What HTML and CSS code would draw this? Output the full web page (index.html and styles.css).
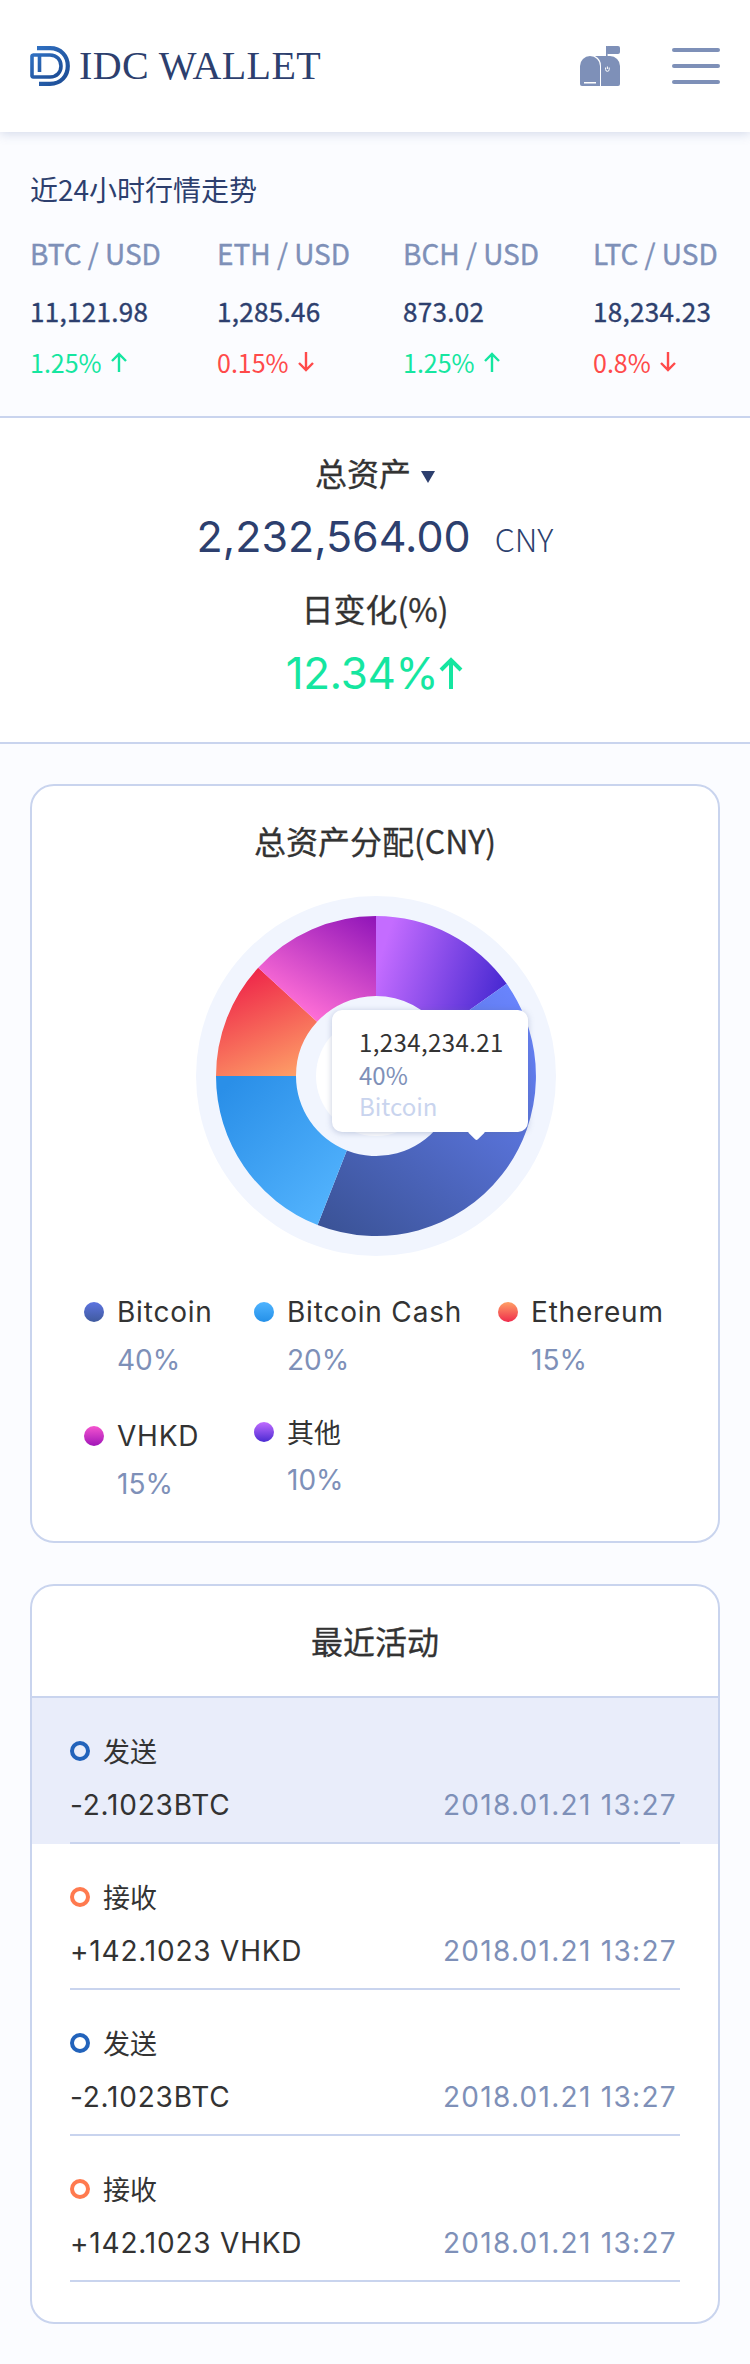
FILE: index.html
```html
<!DOCTYPE html>
<html lang="zh-CN">

<head>
  <meta charset="UTF-8">
  <meta name="viewport" content="width=device-width, initial-scale=1.0">
  <title>IDC Wallet</title>
  <link rel="stylesheet" href="styles.css">
</head>

<body>
  <header class="topbar">
    <div class="brand">
      <svg class="brand-mark" viewBox="0 0 40 40" width="40" height="40">
        <defs>
          <linearGradient id="logoBlue" x1="0" y1="0" x2="1" y2="1">
            <stop offset="0" stop-color="#2f6fc0" />
            <stop offset="1" stop-color="#1d4c94" />
          </linearGradient>
        </defs>
        <path d="M7 2.2H20C31 2.2 37.8 10 37.8 20S31 37.8 20 37.8H9" fill="none" stroke="url(#logoBlue)" stroke-width="4.2" />
        <path d="M10 9H3.5A1.8 1.8 0 0 0 2 11V29A1.8 1.8 0 0 0 3.5 31H20C27 31 31 26 31 20S27 9 20 9H9.5V26" fill="none" stroke="url(#logoBlue)" stroke-width="3.6" />
      </svg>
      <span class="brand-name">IDC WALLET</span>
    </div>
    <div class="topbar-actions">
      <svg class="mailbox" viewBox="0 0 40 40" width="40" height="40">
        <path d="M0 38V20a10 10 0 0 1 20 0V40H2a2 2 0 0 1-2-2Z" fill="#7e90b8" />
        <path d="M15 10H30a10 10 0 0 1 10 10V38a2 2 0 0 1-2 2H21V20a11 11 0 0 0-6-10Z" fill="#7e90b8" />
        <rect x="26" y="0" width="14" height="8" rx="2" fill="#7e90b8" />
        <rect x="26" y="0" width="1.6" height="11" fill="#7e90b8" />
        <rect x="4" y="36" width="12" height="1.5" fill="#fff" />
        <path d="M25.6 21.5v2a1.8 1.8 0 0 0 3.6 0v-2M27.4 20.5v2.5" fill="none" stroke="#fff" stroke-width="1" />
      </svg>
      <div class="burger">
        <span></span>
        <span></span>
        <span></span>
      </div>
    </div>
  </header>

  <section class="market">
    <h2 class="market-title">近24小时行情走势</h2>
    <div class="ticker">
      <div class="ticker-col">
        <div class="pair">BTC / USD</div>
        <div class="price">11,121.98</div>
        <div class="change up">1.25%
          <svg class="arrow" viewBox="0 0 18 20" width="18" height="20"><path d="M9 20V2M2 9L9 2L16 9" /></svg>
        </div>
      </div>
      <div class="ticker-col">
        <div class="pair">ETH / USD</div>
        <div class="price">1,285.46</div>
        <div class="change down">0.15%
          <svg class="arrow" viewBox="0 0 18 20" width="18" height="20"><path d="M9 0V18M2 11L9 18L16 11" /></svg>
        </div>
      </div>
      <div class="ticker-col">
        <div class="pair">BCH / USD</div>
        <div class="price">873.02</div>
        <div class="change up">1.25%
          <svg class="arrow" viewBox="0 0 18 20" width="18" height="20"><path d="M9 20V2M2 9L9 2L16 9" /></svg>
        </div>
      </div>
      <div class="ticker-col">
        <div class="pair">LTC / USD</div>
        <div class="price">18,234.23</div>
        <div class="change down">0.8%
          <svg class="arrow" viewBox="0 0 18 20" width="18" height="20"><path d="M9 0V18M2 11L9 18L16 11" /></svg>
        </div>
      </div>
    </div>
  </section>

  <section class="total">
    <div class="total-label">总资产<span class="caret"></span></div>
    <div class="total-amount">2,232,564.00<span class="total-unit">CNY</span></div>
    <div class="total-label daily">日变化(%)</div>
    <div class="total-change">12.34%<svg class="arrow-big" viewBox="0 0 26 32" width="26" height="32"><path d="M13 32V3M3 13L13 3L23 13" /></svg></div>
  </section>

  <main class="content">
    <section class="card alloc">
      <h3 class="card-title">总资产分配(CNY)</h3>
      <div class="donut">
        <svg viewBox="0 0 360 360" width="360" height="360">
          <defs>
            <linearGradient id="gPurple" gradientUnits="userSpaceOnUse" x1="185" y1="60" x2="310" y2="100">
              <stop offset="0" stop-color="#c46cff" />
              <stop offset="1" stop-color="#4427d0" />
            </linearGradient>
            <linearGradient id="gBlue" gradientUnits="userSpaceOnUse" x1="130" y1="340" x2="320" y2="90">
              <stop offset="0" stop-color="#3a5295" />
              <stop offset="1" stop-color="#6a85ff" />
            </linearGradient>
            <linearGradient id="gSky" gradientUnits="userSpaceOnUse" x1="30" y1="190" x2="150" y2="320">
              <stop offset="0" stop-color="#2a8fe8" />
              <stop offset="1" stop-color="#56b6ff" />
            </linearGradient>
            <linearGradient id="gOrange" gradientUnits="userSpaceOnUse" x1="60" y1="70" x2="110" y2="185">
              <stop offset="0" stop-color="#ee2449" />
              <stop offset="1" stop-color="#ffa869" />
            </linearGradient>
            <linearGradient id="gPink" gradientUnits="userSpaceOnUse" x1="120" y1="125" x2="180" y2="20">
              <stop offset="0" stop-color="#ff6fd6" />
              <stop offset="1" stop-color="#8f14b8" />
            </linearGradient>
          </defs>
          <circle cx="180" cy="180" r="180" fill="#f1f5fe" />
          <path d="M180 20A160 160 0 0 1 310.7 87.8L245.4 133.9A80 80 0 0 0 180 100Z" fill="url(#gPurple)" />
          <path d="M310.7 87.8A160 160 0 0 1 121.6 329L150.8 254.5A80 80 0 0 0 245.4 133.9Z" fill="url(#gBlue)" />
          <path d="M121.6 329A160 160 0 0 1 20 180L100 180A80 80 0 0 0 150.8 254.5Z" fill="url(#gSky)" />
          <path d="M20 180A160 160 0 0 1 62.2 71.7L121.1 125.8A80 80 0 0 0 100 180Z" fill="url(#gOrange)" />
          <path d="M62.2 71.7A160 160 0 0 1 180 20L180 100A80 80 0 0 0 121.1 125.8Z" fill="url(#gPink)" />
          <circle cx="180" cy="180" r="60" fill="#fff" />
        </svg>
        <div class="tooltip">
          <div class="tip-value">1,234,234.21</div>
          <div class="tip-pct">40%</div>
          <div class="tip-name">Bitcoin</div>
        </div>
      </div>
      <div class="legend">
        <div class="legend-item">
          <div class="legend-name"><i class="dot dot-btc"></i>Bitcoin</div>
          <div class="legend-pct">40%</div>
        </div>
        <div class="legend-item">
          <div class="legend-name"><i class="dot dot-bch"></i>Bitcoin Cash</div>
          <div class="legend-pct">20%</div>
        </div>
        <div class="legend-item">
          <div class="legend-name"><i class="dot dot-eth"></i>Ethereum</div>
          <div class="legend-pct">15%</div>
        </div>
        <div class="legend-item">
          <div class="legend-name"><i class="dot dot-vhkd"></i>VHKD</div>
          <div class="legend-pct">15%</div>
        </div>
        <div class="legend-item raised">
          <div class="legend-name cjk"><i class="dot dot-other"></i>其他</div>
          <div class="legend-pct">10%</div>
        </div>
      </div>
    </section>

    <section class="card activity">
      <h3 class="card-title activity-title">最近活动</h3>
      <div class="row active">
        <div class="row-inner">
          <div class="row-type"><i class="ring ring-send"></i>发送</div>
          <div class="row-line"><span class="row-amount">-2.1023BTC</span><span class="row-date">2018.01.21 13:27</span></div>
        </div>
      </div>
      <div class="row">
        <div class="row-inner">
          <div class="row-type"><i class="ring ring-recv"></i>接收</div>
          <div class="row-line"><span class="row-amount">+142.1023 VHKD</span><span class="row-date">2018.01.21 13:27</span></div>
        </div>
      </div>
      <div class="row">
        <div class="row-inner">
          <div class="row-type"><i class="ring ring-send"></i>发送</div>
          <div class="row-line"><span class="row-amount">-2.1023BTC</span><span class="row-date">2018.01.21 13:27</span></div>
        </div>
      </div>
      <div class="row">
        <div class="row-inner">
          <div class="row-type"><i class="ring ring-recv"></i>接收</div>
          <div class="row-line"><span class="row-amount">+142.1023 VHKD</span><span class="row-date">2018.01.21 13:27</span></div>
        </div>
      </div>
    </section>
  </main>
</body>

</html>
```

FILE: styles.css
```css
* {
  box-sizing: border-box;
}

body {
  margin: 0;
  font-family: "Noto Sans CJK SC", "Noto Sans", sans-serif;
  background-color: #fbfcff;
  color: #333;
}

h2,
h3 {
  margin: 0;
  font-weight: 400;
}

.topbar {
  height: 132px;
  padding: 0 30px;
  display: flex;
  align-items: center;
  justify-content: space-between;
  background-color: #fff;
  box-shadow: 0 2px 10px rgba(100, 120, 170, 0.25);
  position: relative;
}

.brand {
  display: flex;
  align-items: center;
  gap: 9px;
}

.brand-name {
  font-family: "Liberation Serif", serif;
  font-size: 40px;
  line-height: 38px;
  letter-spacing: 0.4px;
  color: #2d3f6e;
}

.topbar-actions {
  display: flex;
  align-items: center;
  gap: 52px;
}

.burger {
  width: 48px;
  display: flex;
  flex-direction: column;
  gap: 12px;
}

.burger span {
  height: 4px;
  border-radius: 2px;
  background-color: #7e90b8;
}

.market {
  height: 286px;
  padding: 36px 30px 0;
  border-bottom: 2px solid #c9d4ee;
}

.market-title {
  font-size: 28px;
  line-height: 42px;
  color: #2d3f6e;
}

.ticker {
  margin-top: 22px;
  display: grid;
  grid-template-columns: 187px 186px 190px 1fr;
}

.pair {
  font-size: 28px;
  line-height: 42px;
  white-space: nowrap;
  color: #7e90b8;
  -webkit-text-stroke: 0.4px #7e90b8;
}

.price {
  margin-top: 16px;
  font-size: 26px;
  line-height: 42px;
  letter-spacing: 0.3px;
  color: #2d3f6e;
  -webkit-text-stroke: 0.4px #2d3f6e;
}

.change {
  margin-top: 10px;
  font-size: 25px;
  line-height: 40px;
  display: flex;
  align-items: center;
  gap: 8px;
}

.change.up {
  color: #15e6a0;
}

.change.down {
  color: #ff4a4a;
}

.arrow,
.arrow-big {
  fill: none;
  stroke: currentColor;
  stroke-width: 2.4;
}

.total {
  height: 326px;
  padding-top: 31px;
  background-color: #fff;
  border-bottom: 2px solid #c9d4ee;
  text-align: center;
}

.total-label {
  font-size: 32px;
  line-height: 46px;
  -webkit-text-stroke: 0.3px #333;
}

.total-label.daily {
  margin-top: 20px;
}

.caret {
  display: inline-block;
  margin-left: 10px;
  vertical-align: 3px;
  border-left: 7px solid transparent;
  border-right: 7px solid transparent;
  border-top: 12px solid #2d3f6e;
}

.total-amount {
  margin-top: 14px;
  font-family: Inter, sans-serif;
  font-size: 43px;
  line-height: 54px;
  color: #2d3f6e;
}

.total-unit {
  margin-left: 24px;
  font-family: "Noto Sans CJK SC", sans-serif;
  font-size: 32px;
  font-weight: 300;
}

.total-change {
  margin-top: 15px;
  font-family: Inter, sans-serif;
  font-size: 44px;
  line-height: 54px;
  letter-spacing: -0.4px;
  color: #15e6a0;
}

.arrow-big {
  stroke-width: 4;
}

.content {
  padding: 40px 30px;
}

.card {
  border: 2px solid #c9d4ee;
  border-radius: 24px;
  background-color: #fff;
  overflow: hidden;
}

.card-title {
  text-align: center;
  font-size: 32px;
  line-height: 48px;
  -webkit-text-stroke: 0.3px #333;
}

.alloc {
  height: 759px;
  padding-top: 30px;
}

.donut {
  margin: 32px auto 0;
  width: 360px;
  height: 360px;
  position: relative;
  left: 1px;
}

.tooltip {
  position: absolute;
  left: 136px;
  top: 114px;
  width: 196px;
  height: 122px;
  padding: 15px 0 0 27px;
  border-radius: 10px;
  background-color: #fff;
  box-shadow: 0 1px 6px rgba(90, 110, 160, 0.35);
}

.tooltip::after {
  content: "";
  position: absolute;
  left: 138px;
  bottom: -6px;
  width: 13px;
  height: 13px;
  border-radius: 2px;
  background-color: #fff;
  transform: rotate(45deg);
}

.tip-value {
  font-size: 24px;
  line-height: 34px;
  letter-spacing: 0.4px;
}

.tip-pct {
  font-size: 24px;
  line-height: 32px;
  color: #7e90b8;
}

.tip-name {
  font-size: 24px;
  line-height: 30px;
  color: #c9d4ee;
}

.legend {
  margin-top: 39px;
  padding-left: 52px;
  display: grid;
  grid-template-columns: 170px 244px 1fr;
  row-gap: 42px;
  align-items: start;
}

.legend-name {
  display: flex;
  align-items: center;
  font-family: Inter, sans-serif;
  font-size: 28px;
  line-height: 34px;
  letter-spacing: 0.8px;
}

.legend-name.cjk {
  font-family: "Noto Sans CJK SC", sans-serif;
  font-size: 27px;
  letter-spacing: 0;
}

.legend-item.raised {
  margin-top: -4px;
}

.legend-pct {
  margin-top: 14px;
  padding-left: 33px;
  font-family: Inter, sans-serif;
  font-size: 28px;
  line-height: 34px;
  color: #7e90b8;
}

.dot {
  flex: none;
  width: 20px;
  height: 20px;
  margin-right: 13px;
  border-radius: 50%;
}

.dot-btc {
  background: linear-gradient(#5d74e0, #3f5a9e);
}

.dot-bch {
  background: linear-gradient(#4fb4ff, #2490e8);
}

.dot-eth {
  background: linear-gradient(#ffa066, #ef2c4c);
}

.dot-vhkd {
  background: linear-gradient(#f554cf, #a015b8);
}

.dot-other {
  background: linear-gradient(#c06cff, #4a2bd2);
}

.activity {
  margin-top: 41px;
  height: 740px;
}

.activity-title {
  height: 112px;
  padding-top: 30px;
  border-bottom: 2px solid #c9d4ee;
}

.row {
  height: 146px;
  padding: 0 38px;
}

.row.active {
  background-color: #e9edfa;
}

.row-inner {
  height: 146px;
  padding-top: 31px;
  border-bottom: 2px solid #c9d4ee;
}

.row-type {
  display: flex;
  align-items: center;
  font-size: 27px;
  line-height: 44px;
}

.ring {
  flex: none;
  width: 20px;
  height: 20px;
  margin-right: 13px;
  border-radius: 50%;
  border: 4px solid;
}

.ring-send {
  border-color: #2263bb;
}

.ring-recv {
  border-color: #ff7a4f;
}

.row-line {
  margin-top: 10px;
  padding-right: 3px;
  display: flex;
  justify-content: space-between;
  font-family: Inter, sans-serif;
  font-size: 28px;
  line-height: 44px;
}

.row-amount {
  letter-spacing: 0.8px;
}

.row-date {
  letter-spacing: 1.3px;
  color: #7e90b8;
}
```
